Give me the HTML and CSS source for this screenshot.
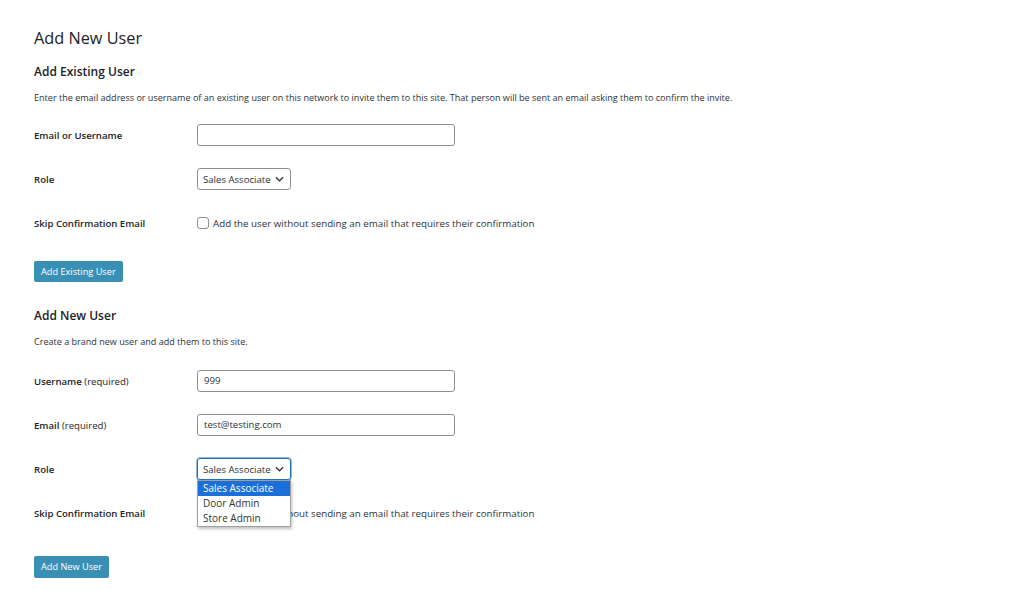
FILE: index.html
```html
<!DOCTYPE html>
<html>
<head>
<meta charset="utf-8">
<link rel="stylesheet" href="styles.css">
</head>
<body>
<div class="wrap">
  <h1 class="title">Add New User</h1>

  <h2 class="section">Add Existing User</h2>
  <p class="desc">Enter the email address or username of an existing user on this network to invite them to this site. That person will be sent an email asking them to confirm the invite.</p>

  <div class="rows">
    <div class="row">
      <div class="label">Email or Username</div>
      <div class="field"><div class="input"></div></div>
    </div>
    <div class="row">
      <div class="label">Role</div>
      <div class="field">
        <div class="select"><span>Sales Associate</span><svg class="chev" viewBox="0 0 10 6" width="9" height="6"><path d="M1 1 L5 5 L9 1" fill="none" stroke="#2c3338" stroke-width="1.4"/></svg></div>
      </div>
    </div>
    <div class="row">
      <div class="label">Skip Confirmation Email</div>
      <div class="field check"><span class="box"></span><span class="ctext">Add the user without sending an email that requires their confirmation</span></div>
    </div>
  </div>
  <div class="btnrow"><span class="button">Add Existing User</span></div>

  <h2 class="section second">Add New User</h2>
  <p class="desc">Create a brand new user and add them to this site.</p>

  <div class="rows second">
    <div class="row">
      <div class="label">Username <span class="req">(required)</span></div>
      <div class="field"><div class="input">999</div></div>
    </div>
    <div class="row">
      <div class="label">Email <span class="req">(required)</span></div>
      <div class="field"><div class="input">test@testing.com</div></div>
    </div>
    <div class="row">
      <div class="label">Role</div>
      <div class="field">
        <div class="select focused"><span>Sales Associate</span><svg class="chev" viewBox="0 0 10 6" width="9" height="6"><path d="M1 1 L5 5 L9 1" fill="none" stroke="#2c3338" stroke-width="1.4"/></svg>
          <ul class="menu">
            <li class="sel">Sales Associate</li>
            <li>Door Admin</li>
            <li>Store Admin</li>
          </ul>
        </div>
      </div>
    </div>
    <div class="row">
      <div class="label">Skip Confirmation Email</div>
      <div class="field check"><span class="box"></span><span class="ctext">Add the user without sending an email that requires their confirmation</span></div>
    </div>
  </div>
  <div class="btnrow second"><span class="button tall">Add New User</span></div>
</div>
</body>
</html>
```

FILE: styles.css
```css
html, body {
  margin: 0;
  padding: 0;
  background: #fff;
}
body {
  font-family: "Open Sans", "Noto Sans", sans-serif;
  color: #1d2327;
  width: 1030px;
  height: 614px;
  overflow: hidden;
}
.wrap {
  padding: 27px 0 0 34px;
}
.title {
  margin: 0;
  font-size: 16.3px;
  font-weight: 400;
  line-height: 22px;
  color: #1d2327;
}
.section {
  margin: 13px 0 0 0;
  font-size: 12px;
  font-weight: 600;
  line-height: 20px;
}
.section.second {
  margin-top: 24px;
}
.desc {
  margin: 9px 0 0 0;
  font-size: 9.05px;
  line-height: 14px;
  color: #2c3338;
}
.rows {
  margin-top: 19px;
  display: flex;
  flex-direction: column;
  gap: 22px;
}
.rows.second {
  margin-top: 21px;
}
.row {
  display: flex;
  align-items: center;
  height: 22px;
}
.label {
  width: 163px;
  flex: none;
  font-size: 9.6px;
  font-weight: 600;
  color: #1d2327;
}
.req {
  font-weight: 400;
}
.field {
  display: flex;
  align-items: center;
}
.input {
  box-sizing: border-box;
  width: 258px;
  height: 22px;
  border: 1px solid #8c8f94;
  border-radius: 3px;
  padding: 0 6px;
  font-size: 9.6px;
  line-height: 20px;
  color: #2c3338;
}
.select {
  position: relative;
  box-sizing: border-box;
  width: 94px;
  height: 22px;
  border: 1px solid #8c8f94;
  border-radius: 3px;
  padding: 0 0 0 5px;
  display: flex;
  align-items: center;
  gap: 4px;
  font-size: 9.6px;
  color: #2c3338;
}
.select.focused {
  border-color: #2271b1;
  box-shadow: 0 0 0 0.5px #2271b1;
}
.chev {
  flex: none;
}
.check {
  gap: 4px;
}
.box {
  box-sizing: border-box;
  width: 12px;
  height: 12px;
  border: 1px solid #8c8f94;
  border-radius: 3px;
  background: #fff;
}
.ctext {
  font-size: 9.75px;
  color: #2c3338;
}
.btnrow {
  margin-top: 27px;
  display: flex;
}
.btnrow.second {
  margin-top: 32px;
}
.button {
  display: inline-block;
  background: #3a8fb4;
  color: #fff;
  font-size: 9.2px;
  line-height: 21px;
  padding: 0 7px;
  border-radius: 2px;
}
.button.tall {
  line-height: 22px;
}
.menu {
  position: absolute;
  top: 21px;
  left: -1px;
  width: 94px;
  box-sizing: border-box;
  margin: 0;
  padding: 0;
  list-style: none;
  background: #fff;
  border: 1px solid #a0a0a0;
  box-shadow: 1px 2px 3px rgba(0,0,0,0.25);
  z-index: 5;
}
.menu li {
  font-size: 10px;
  line-height: 15px;
  padding: 0 5px;
  color: #333;
}
.menu li.sel {
  background: #1b6fd8;
  color: #fff;
}
```
